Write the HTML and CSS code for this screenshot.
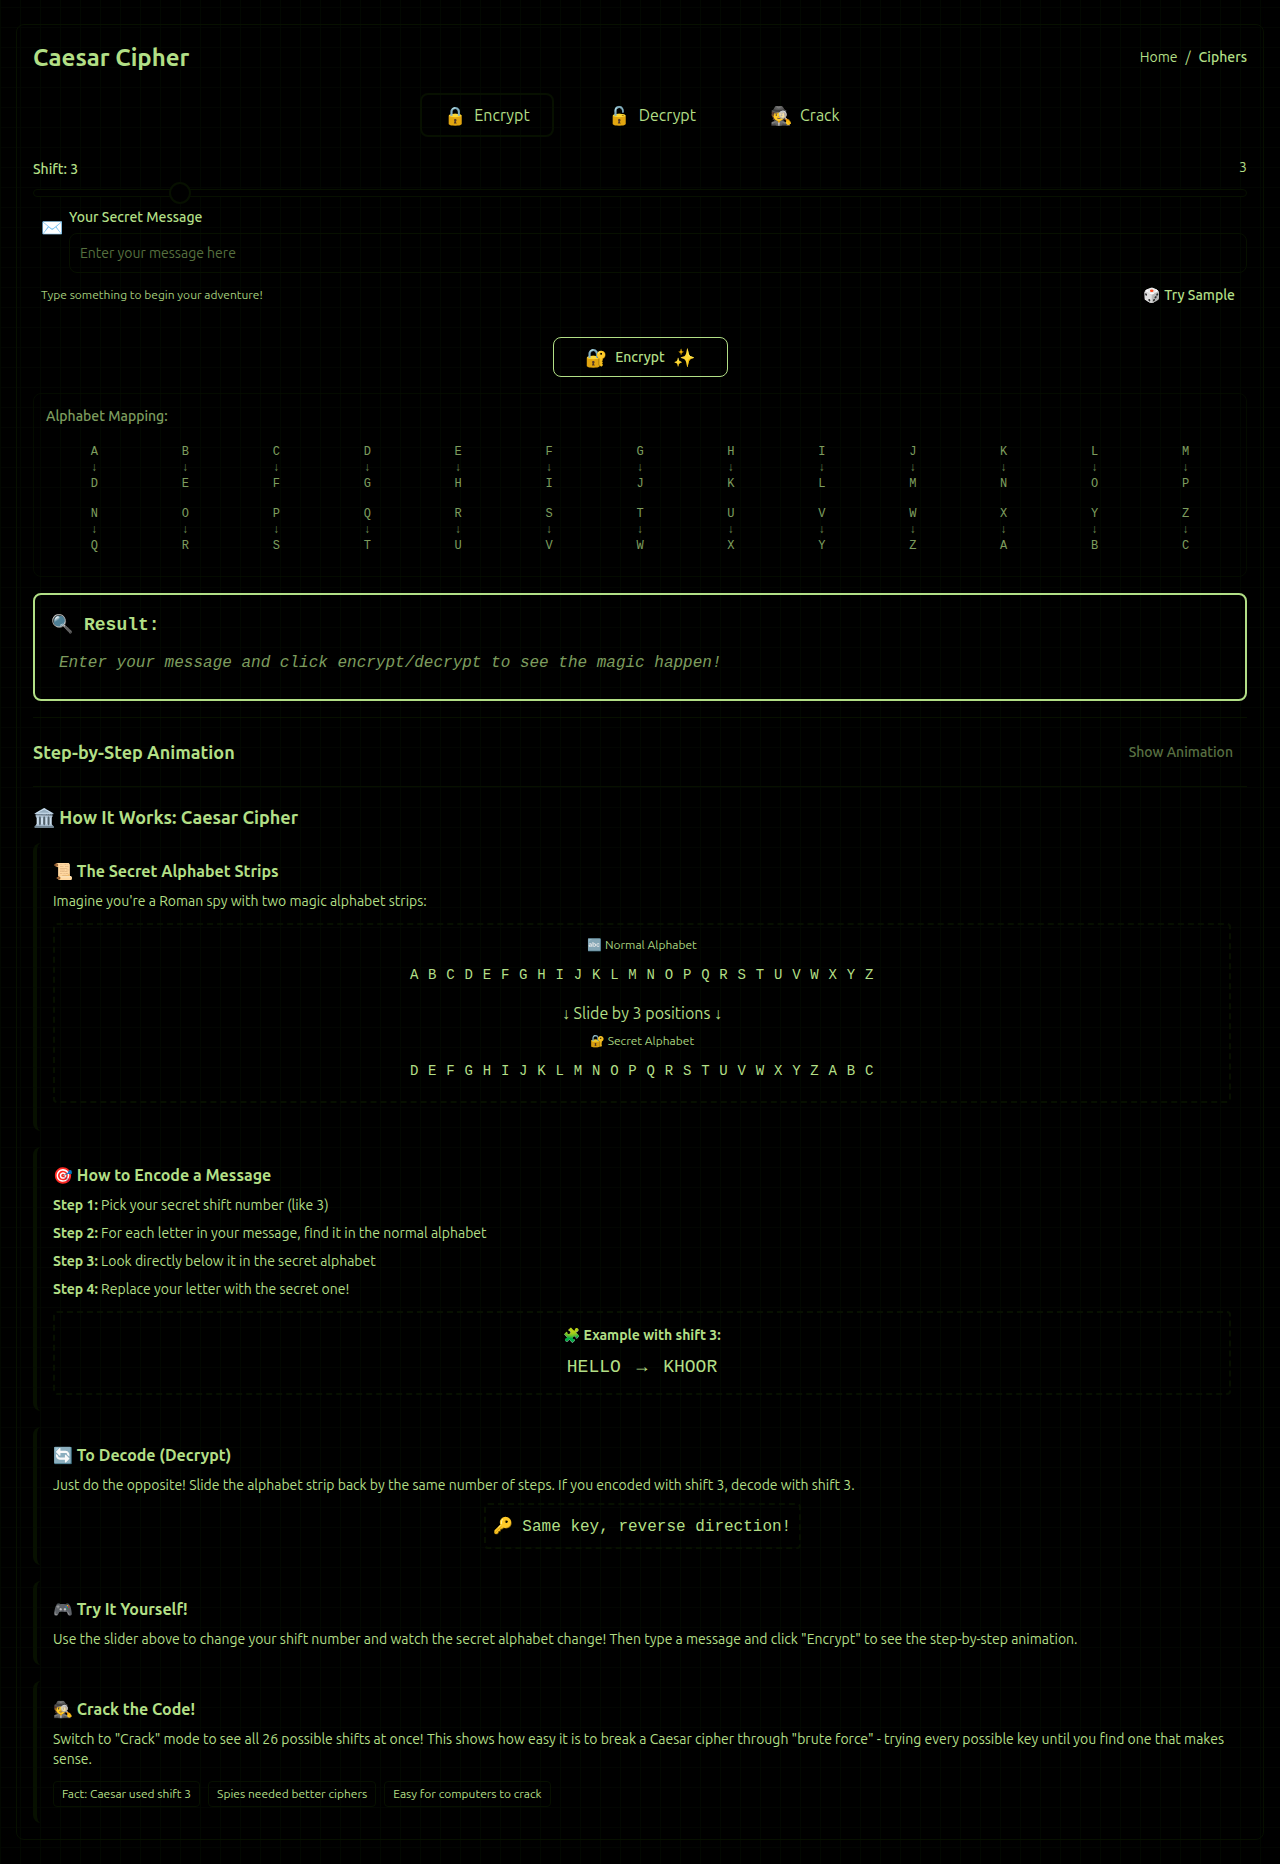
FILE: index.html
```html
<!DOCTYPE html>
<html lang="en">
<head>
<meta charset="utf-8">
<title>Caesar Cipher</title>
<link rel="stylesheet" href="styles.css">
</head>
<body>
<main class="panel">
  <header class="head">
    <h1 class="title">Caesar Cipher</h1>
    <nav class="crumbs"><span class="crumb">Home</span><span class="sep">/</span><span class="crumb-current">Ciphers</span></nav>
  </header>
  <div class="tabs">
    <div class="tab tab-active"><span class="tab-icon">🔒</span><span class="tab-text">Encrypt</span></div>
    <div class="tab tab-decrypt"><span class="tab-icon">🔓</span><span class="tab-text">Decrypt</span></div>
    <div class="tab tab-crack"><span class="tab-icon">🕵️</span><span class="tab-text">Crack</span></div>
  </div>
  <div class="shift"><span class="shift-label">Shift: 3</span><span class="shift-value">3</span></div>
  <div class="slider"><div class="thumb"></div></div>
  <div class="message">
    <span class="mail">✉️</span>
    <div class="field">
      <div class="field-label"><span>Your Secret Message</span></div>
      <div class="input"><span>Enter your message here</span></div>
    </div>
  </div>
  <div class="hint-row"><span class="hint">Type something to begin your adventure!</span><span class="sample"><span class="dice">🎲</span><span class="sample-text">Try Sample</span></span></div>
  <div class="action"><div class="go"><span class="go-icon">🔐</span><span class="go-text">Encrypt</span><span class="go-icon">✨</span></div></div>
  <section class="mapping">
    <div class="mapping-title"><span>Alphabet Mapping:</span></div>
    <div class="map-grid">
      <div class="pair"><span>A</span><i>↓</i><span>D</span></div><div class="pair"><span>B</span><i>↓</i><span>E</span></div><div class="pair"><span>C</span><i>↓</i><span>F</span></div><div class="pair"><span>D</span><i>↓</i><span>G</span></div><div class="pair"><span>E</span><i>↓</i><span>H</span></div><div class="pair"><span>F</span><i>↓</i><span>I</span></div><div class="pair"><span>G</span><i>↓</i><span>J</span></div><div class="pair"><span>H</span><i>↓</i><span>K</span></div><div class="pair"><span>I</span><i>↓</i><span>L</span></div><div class="pair"><span>J</span><i>↓</i><span>M</span></div><div class="pair"><span>K</span><i>↓</i><span>N</span></div><div class="pair"><span>L</span><i>↓</i><span>O</span></div><div class="pair"><span>M</span><i>↓</i><span>P</span></div>
      <div class="pair"><span>N</span><i>↓</i><span>Q</span></div><div class="pair"><span>O</span><i>↓</i><span>R</span></div><div class="pair"><span>P</span><i>↓</i><span>S</span></div><div class="pair"><span>Q</span><i>↓</i><span>T</span></div><div class="pair"><span>R</span><i>↓</i><span>U</span></div><div class="pair"><span>S</span><i>↓</i><span>V</span></div><div class="pair"><span>T</span><i>↓</i><span>W</span></div><div class="pair"><span>U</span><i>↓</i><span>X</span></div><div class="pair"><span>V</span><i>↓</i><span>Y</span></div><div class="pair"><span>W</span><i>↓</i><span>Z</span></div><div class="pair"><span>X</span><i>↓</i><span>A</span></div><div class="pair"><span>Y</span><i>↓</i><span>B</span></div><div class="pair"><span>Z</span><i>↓</i><span>C</span></div>
    </div>
  </section>
  <section class="result">
    <div class="result-title"><span>🔍</span><span>Result:</span></div>
    <div class="result-text">Enter your message and click encrypt/decrypt to see the magic happen!</div>
  </section>
  <section class="animation"><h2 class="h2">Step-by-Step Animation</h2><span class="show">Show Animation</span></section>
  <section class="how">
    <h2 class="h2 how-title">🏛️ How It Works: Caesar Cipher</h2>
    <article class="card card-strips">
      <h3 class="h3">📜 The Secret Alphabet Strips</h3>
      <p class="text">Imagine you're a Roman spy with two magic alphabet strips:</p>
      <div class="dashed strips">
        <div class="small">🔤 Normal Alphabet</div>
        <div class="letters">A B C D E F G H I J K L M N O P Q R S T U V W X Y Z</div>
        <div class="slide">↓ Slide by 3 positions ↓</div>
        <div class="small">🔐 Secret Alphabet</div>
        <div class="letters">D E F G H I J K L M N O P Q R S T U V W X Y Z A B C</div>
      </div>
    </article>
    <article class="card card-encode">
      <h3 class="h3">🎯 How to Encode a Message</h3>
      <p class="text step"><b>Step 1:</b> Pick your secret shift number (like 3)</p>
      <p class="text step"><b>Step 2:</b> For each letter in your message, find it in the normal alphabet</p>
      <p class="text step"><b>Step 3:</b> Look directly below it in the secret alphabet</p>
      <p class="text step"><b>Step 4:</b> Replace your letter with the secret one!</p>
      <div class="dashed example">
        <div class="example-title">🧩 Example with shift 3:</div>
        <div class="example-text">HELLO <span class="arrow">→</span> KHOOR</div>
      </div>
    </article>
    <article class="card card-decode">
      <h3 class="h3">🔄 To Decode (Decrypt)</h3>
      <p class="text">Just do the opposite! Slide the alphabet strip back by the same number of steps. If you encoded with shift 3, decode with shift 3.</p>
      <div class="dashed key">🔑 Same key, reverse direction!</div>
    </article>
    <article class="card card-try">
      <h3 class="h3">🎮 Try It Yourself!</h3>
      <p class="text">Use the slider above to change your shift number and watch the secret alphabet change! Then type a message and click "Encrypt" to see the step-by-step animation.</p>
    </article>
    <article class="card card-crack">
      <h3 class="h3">🕵️ Crack the Code!</h3>
      <p class="text">Switch to "Crack" mode to see all 26 possible shifts at once! This shows how easy it is to break a Caesar cipher through "brute force" - trying every possible key until you find one that makes sense.</p>
      <div class="tags"><span class="tag">Fact: Caesar used shift 3</span><span class="tag">Spies needed better ciphers</span><span class="tag">Easy for computers to crack</span></div>
    </article>
  </section>
</main>
</body>
</html>
```
FILE: styles.css
```css
:root {
  --text: #b2df86;
  --line: #071000;
}
* { box-sizing: border-box; }
html { background: #000; }
body {
  margin: 0;
  padding: 24px 16px;
  background-color: #000;
  background-image:
    linear-gradient(#030602 1px, transparent 1px),
    linear-gradient(90deg, #020801 1px, transparent 1px);
  background-size: 20px 20px;
  background-position: 0 7px, 0 0;
  color: var(--text);
  font: 400 14px/20px Ubuntu, "Open Sans", sans-serif;
}
h1, h2, h3, p { margin: 0; }
.panel { height: 1816px; padding: 16px; border: 1px solid var(--line); border-radius: 8px; }
.head { display: flex; justify-content: space-between; align-items: center; height: 32px; }
.title { font-size: 24px; font-weight: 600; line-height: 32px; padding-top: 1px; }
.crumbs { display: flex; gap: 8px; }
.crumb-current { font-weight: 500; }
.tabs { display: flex; justify-content: center; height: 44px; margin-top: 20px; padding-left: 4px; gap: 28px; }
.tab { display: flex; align-items: center; gap: 8px; padding: 0 22px; border: 2px solid transparent; border-radius: 8px; font-size: 16px; }
.tab-active { border-color: var(--line); }
.tab-decrypt { gap: 9px; margin: 0 -2px 0 2px; }
.tab-icon { font-size: 18px; }
.shift { display: flex; justify-content: space-between; height: 20px; margin-top: 22px; font-weight: 500; }
.shift-value { height: 16px; line-height: 16px; font-weight: 400; }
.slider { height: 8px; margin-top: 10px; border: 1px solid var(--line); border-radius: 4px; background: #000; }
.thumb { width: 22px; height: 22px; margin: -8px 0 0 135px; border: 2px solid var(--line); border-radius: 50%; background: #000; }
.message { display: flex; height: 66px; margin-top: 10px; padding-left: 8px; }
.mail { width: 28px; padding-top: 10px; font-size: 18px; }
.field { flex: 1; }
.field-label { height: 26px; font-weight: 500; }
.input { height: 40px; padding: 9px 10px; border: 1px solid var(--line); border-radius: 8px; color: #56703f; }
.hint-row { display: flex; justify-content: space-between; align-items: center; height: 20px; margin-top: 12px; padding: 0 12px 0 8px; }
.hint { font-size: 12px; color: #a3cc7b; }
.sample { display: flex; gap: 4px; font-weight: 500; }
.action { display: flex; justify-content: center; margin-top: 32px; }
.go { display: flex; justify-content: center; align-items: center; gap: 8px; width: 175px; height: 40px; border: 1px solid var(--text); border-radius: 8px; font-weight: 500; }
.go-icon { font-size: 18px; }
.mapping { height: 184px; margin-top: 16px; padding: 12px 15px; border: 1px solid var(--line); border-radius: 8px; font-weight: 500; opacity: .7; }
.mapping-title { height: 38px; margin-left: -3px; }
.map-grid { display: grid; grid-template-columns: repeat(13, 1fr); row-gap: 14px; font: 12px/16px "Liberation Mono", monospace; }
.pair { display: flex; flex-direction: column; align-items: center; height: 48px; }
.pair i { font-style: normal; opacity: .85; }
.result { height: 108px; margin-top: 16px; padding: 17px 16px 0; border: 2px solid var(--text); border-radius: 8px; font-family: "Liberation Mono", monospace; }
.result-title { display: flex; gap: 11px; font-size: 18px; font-weight: 700; line-height: 26px; }
.result-text { margin-top: 13px; padding-left: 8px; font-size: 16px; font-style: italic; line-height: 24px; opacity: .7; }
.animation { display: flex; justify-content: space-between; align-items: center; height: 70px; margin-top: 16px; padding-right: 14px; border: solid var(--line); border-width: 1px 0; }
.h2 { font-size: 18px; font-weight: 600; line-height: 26px; }
.show { font-weight: 500; opacity: .5; }
.how-title { margin-top: 17px; }
.card { padding: 16px 16px 0; border-left: 4px solid var(--line); border-radius: 8px; margin-bottom: 16px; }
.card-strips { height: 288px; margin-top: 13px; }
.card-encode { height: 264px; }
.card-decode { height: 138px; }
.card-try { height: 84px; }
.card-crack { height: 142px; margin-bottom: 0; }
.h3 { font-size: 16px; font-weight: 600; line-height: 24px; margin-bottom: 8px; }
.text { line-height: 20px; }
.text b { font-weight: 600; }
.step { margin-bottom: 8px; }
.dashed { border: 2px dashed var(--line); border-radius: 4px; text-align: center; }
.strips { height: 180px; margin-top: 12px; padding-top: 12px; }
.small { font-size: 12px; line-height: 16px; opacity: .95; }
.letters { height: 39px; padding-top: 12px; font: 14px/20px "Liberation Mono", monospace; letter-spacing: .7px; }
.slide { height: 41px; padding-top: 9px; font-size: 16px; line-height: 24px; }
.example { height: 84px; margin-top: 12px; padding-top: 12px; }
.example-title { font-weight: 600; }
.example-text { margin-top: 10px; font: 18px/24px "Liberation Mono", monospace; }
.arrow { margin: 0 5px; }
.key { width: 317px; height: 46px; margin: 8px auto 0; font: 16px/44px "Liberation Mono", monospace; }
.tags { display: flex; gap: 8px; margin-top: 12px; }
.tag { height: 26px; padding: 0 8px; border: 1px solid var(--line); border-radius: 4px; font-size: 12px; line-height: 24px; }
```
